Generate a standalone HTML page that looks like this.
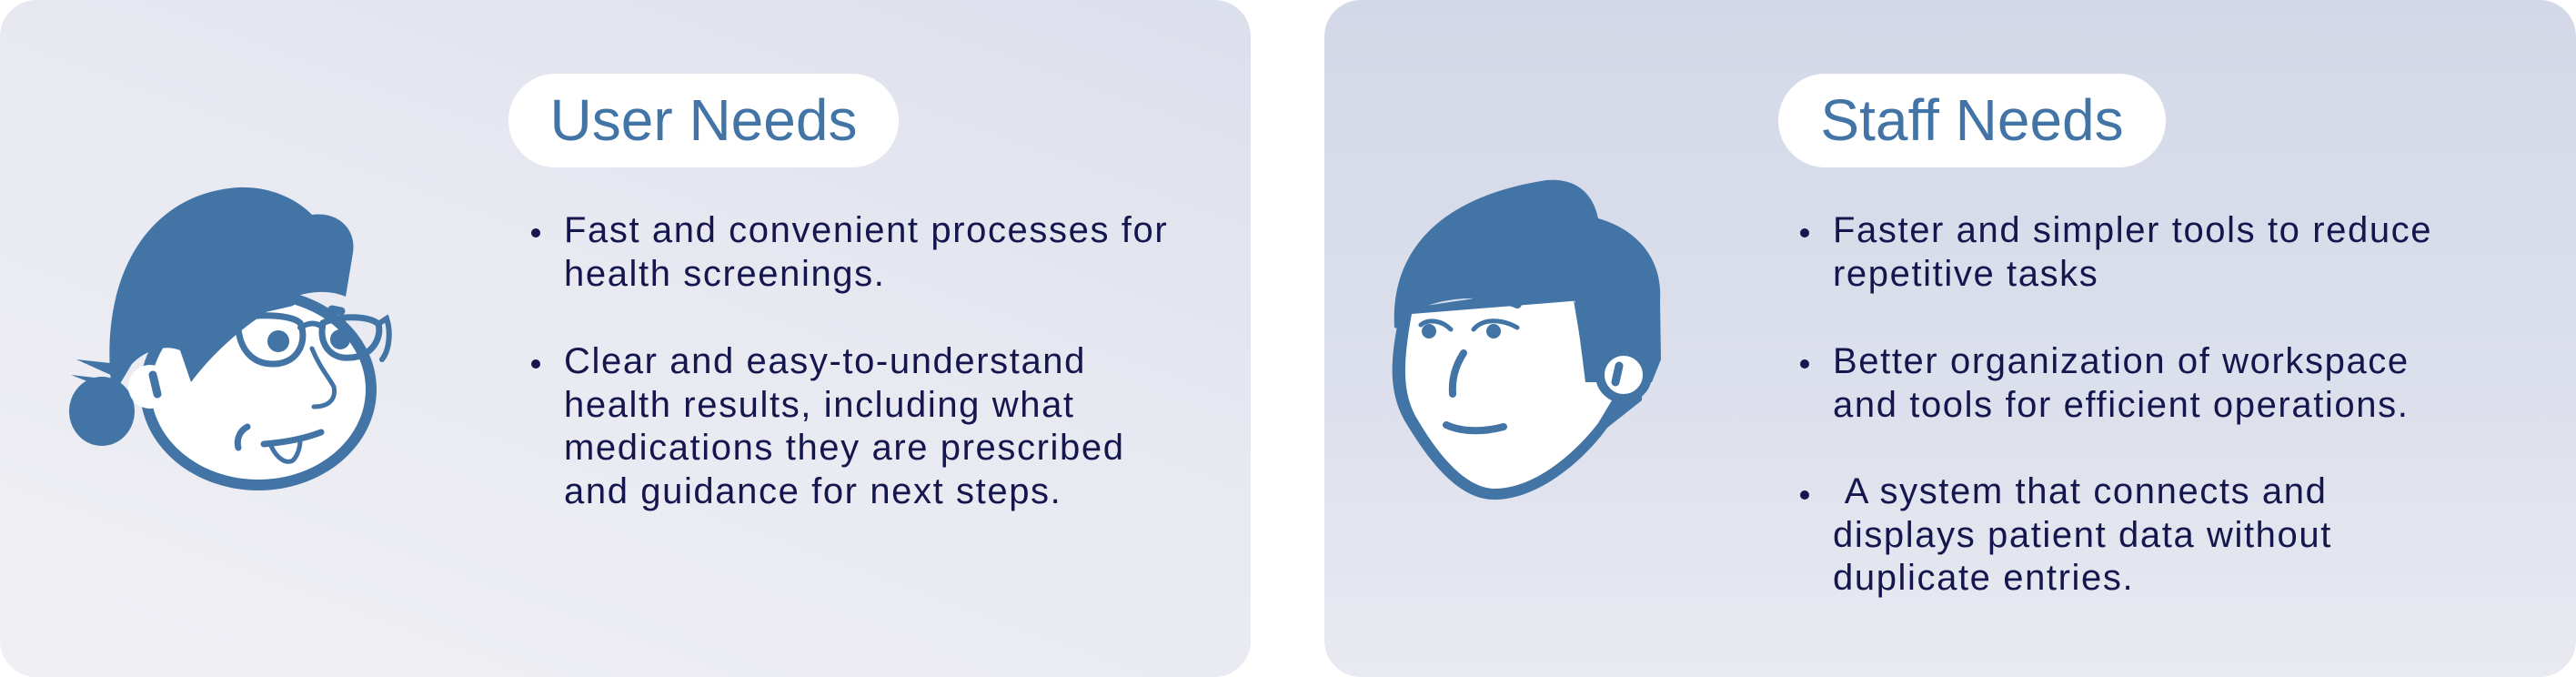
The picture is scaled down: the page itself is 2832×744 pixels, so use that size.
<!DOCTYPE html>
<html><head><meta charset="utf-8"><style>
html,body{margin:0;padding:0;background:#fff;width:2832px;height:744px;overflow:hidden;position:relative;font-family:"Liberation Sans",sans-serif}
.card{position:absolute;top:0;height:744px;border-radius:40px}
#c1{left:0;width:1375px;background:linear-gradient(200deg,#dcdfec 0%,#e8e9f1 45%,#f0f0f4 100%)}
#c2{left:1456px;width:1376px;background:linear-gradient(180deg,#d3d8e8 0%,#dde0ec 60%,#e9eaf1 100%)}
.pill{position:absolute;top:81px;height:103px;background:#fff;border-radius:52px;color:#4274a6;font-size:64px;line-height:103px;text-align:center}
.p{position:absolute;font-size:40px;line-height:47.5px;color:#16164f;white-space:nowrap;letter-spacing:1.6px}
.b{position:absolute;width:10px;height:10px;border-radius:50%;background:#16164f}
svg{position:absolute;left:0;top:0}
</style></head><body>
<div class="card" id="c1"></div>
<div class="card" id="c2"></div>
<div class="pill" style="left:559px;width:429px">User Needs</div>
<div class="pill" style="left:1955px;width:426px">Staff Needs</div>

<div class="b" style="left:584px;top:251px"></div>
<div class="p" style="left:620px;top:230px">Fast and convenient processes for<br>health screenings.</div>
<div class="b" style="left:584px;top:395px"></div>
<div class="p" style="left:620px;top:374px">Clear and easy-to-understand<br>health results, including what<br>medications they are prescribed<br>and guidance for next steps.</div>

<div class="b" style="left:1979px;top:251px"></div>
<div class="p" style="left:2015px;top:230px">Faster and simpler tools to reduce<br>repetitive tasks</div>
<div class="b" style="left:1979px;top:395px"></div>
<div class="p" style="left:2015px;top:374px">Better organization of workspace<br>and tools for efficient operations.</div>
<div class="b" style="left:1979px;top:539px"></div>
<div class="p" style="left:2015px;top:517px">&nbsp;A system that connects and<br>displays patient data without<br>duplicate entries.</div>

<svg width="2832" height="744" viewBox="0 0 2832 744">
<g fill="#4274a6" stroke="none">
 <ellipse cx="112" cy="452" rx="36" ry="38"/>
 <path d="M84 395 L130 400 L126 414 Z M78 412 L130 418 L124 430 Z"/>
 <ellipse cx="284" cy="428" rx="130" ry="111"/>
</g>
<ellipse cx="284" cy="428" rx="118" ry="99" fill="#fff"/>
<path fill="#4274a6" d="M122 420 C110 300 165 212 262 206 C300 204 330 222 343 236 C372 232 392 252 388 278 L380 326 C355 315 318 322 290 345 C250 372 225 400 210 420 L198 385 C180 378 160 385 145 400 L130 425 Z"/>
<circle cx="165" cy="425" r="24" fill="#fff"/>
<g fill="none" stroke="#4274a6" stroke-linecap="round">
 <path d="M168 412 L173 433" stroke-width="9"/>
 <path d="M245 348 L262 352" stroke-width="6"/>
 <path d="M262 350 C260 380 275 400 300 400 C330 400 338 372 330 355 C320 345 280 345 262 350 Z" stroke-width="7"/>
 <path d="M355 355 C350 380 365 395 385 393 C410 392 420 370 416 356 C405 346 370 347 355 355 Z" stroke-width="7"/>
 <path d="M330 360 C340 354 348 354 355 360" stroke-width="6"/>
 <path d="M416 356 L425 350 C430 365 428 385 420 395" stroke-width="6"/>
 <path d="M285 340 L320 332" stroke-width="9"/>
 <path d="M365 340 L375 342" stroke-width="9"/>
 <path d="M343 383 C352 405 362 415 367 425 C370 440 360 447 345 447" stroke-width="5"/>
 <path d="M272 469 C262 474 260 485 262 492" stroke-width="7"/>
 <path d="M290 488 C315 486 335 482 353 475" stroke-width="7"/>
 <path d="M298 490 C305 505 315 510 322 506 C328 500 330 490 330 484" stroke-width="5"/>
</g>
<circle cx="306" cy="375" r="12" fill="#4274a6"/>
<circle cx="374" cy="373" r="11" fill="#4274a6"/>

<path fill="#4274a6" d="M1540 340 C1526 400 1528 432 1544 462 C1574 512 1604 547 1640 549 C1690 551 1742 505 1767 470 L1805 440 L1810 300 Z"/>
<path fill="#fff" d="M1552 345 C1542 400 1542 430 1556 457 C1583 504 1612 535 1641 537 C1685 538 1730 500 1757 465 L1772 440 L1740 330 Z"/>
<path fill="#4274a6" d="M1533 360 C1528 270 1590 215 1700 198 C1735 195 1752 215 1757 240 C1800 252 1828 285 1825 330 L1826 395 L1816 420 L1743 420 L1730 318 C1695 330 1650 327 1610 328 C1580 330 1562 338 1548 345 L1540 362 Z"/>
<path fill="#4274a6" d="M1592 327 C1615 318 1660 312 1712 310 L1690 320 Z"/>
<circle cx="1785" cy="412" r="26" fill="#fff" stroke="#4274a6" stroke-width="10"/>
<path d="M1730 330 L1745 420 L1760 400 L1762 380 Z" fill="#4274a6"/>
<g fill="none" stroke="#4274a6" stroke-linecap="round">
 <path d="M1780 402 L1776 420" stroke-width="9"/>
 <path d="M1620 333 C1635 328 1655 328 1668 334" stroke-width="10"/>
 <path d="M1562 357 C1570 350 1585 352 1595 362" stroke-width="5"/>
 <path d="M1620 362 C1630 350 1650 350 1668 360" stroke-width="5"/>
 <path d="M1609 388 C1598 405 1596 420 1597 433" stroke-width="8"/>
 <path d="M1590 467 C1610 476 1635 474 1653 469" stroke-width="8"/>
</g>
<circle cx="1571" cy="364" r="8" fill="#4274a6"/>
<circle cx="1642" cy="364" r="8" fill="#4274a6"/>
</svg>
</body></html>
